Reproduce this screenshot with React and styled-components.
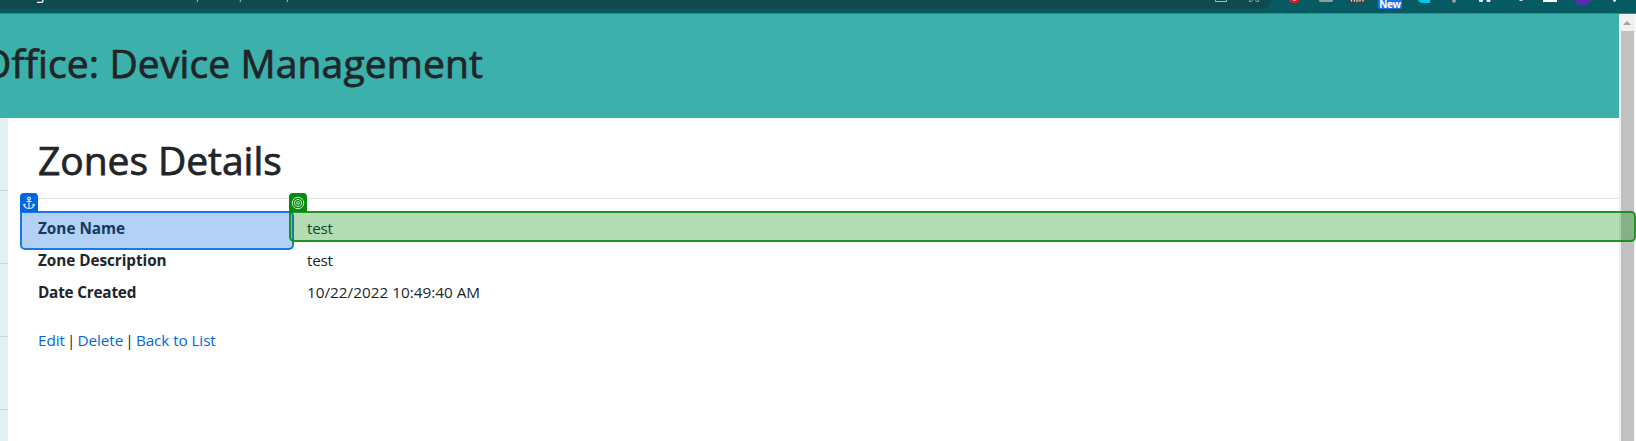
import React from 'react';
import styled, { createGlobalStyle } from 'styled-components';

const Global = createGlobalStyle`
  * { box-sizing: border-box; }
  body { margin: 0; overflow: hidden; background: #fff; color: #212529; font-family: "Open Sans", "Noto Sans", sans-serif; }
`;
const Window = styled.div`width: 1636px; height: 441px; display: flex; flex-direction: column; overflow: hidden; position: relative;`;
const Chrome = styled.div`height: 14px; flex: none; background: #055b61; border-bottom: 1px solid #32888a; display: flex; overflow: hidden;`;
const AddressBar = styled.div`width: 1271px; height: 9px; background: #0f4a50; border-bottom-right-radius: 9px; overflow: hidden;`;
const ToolbarArt = styled.svg`position: absolute; left: 0; top: 0;`;
const NewBadge = styled.span`
  position: absolute; left: 1378px; top: -4px; width: 24px; height: 13px; border-radius: 2px;
  background: #1a73e8; color: #fff; font-size: 10px; font-weight: 700; line-height: 16px; text-align: center;
  letter-spacing: -0.3px;
`;
const Viewport = styled.div`flex: 1; min-height: 0; display: flex;`;
const Page = styled.div`flex: 1; min-width: 0; display: flex; flex-direction: column;`;
const Banner = styled.header`height: 104px; flex: none; background: #3cb0ab; overflow: hidden; padding-top: 23px;`;
const Title = styled.h1`
  margin: 0; font-size: 39px; line-height: 52px; font-weight: 500; white-space: nowrap;
  -webkit-text-stroke: 0.75px currentColor;
  letter-spacing: ${p => p.$track}px; margin-left: ${p => p.$shift || 0}px;
`;
const Body = styled.div`flex: 1; display: flex; min-height: 0;`;
const Sidebar = styled.aside`width: 8px; background: #dff1f0;`;
const SideItem = styled.div`height: 73px; border-bottom: 1px solid #c4d8d6;`;
const Main = styled.main`flex: 1; min-width: 0; padding: 16px 0 0 30px;`;
const Rule = styled.hr`margin: 12px 0 17px; border: 0; height: 1px; background: #e0e1e2;`;
const Details = styled.dl`margin: 0; display: grid; grid-template-columns: 269px 1fr; grid-auto-rows: 32px; font-size: 15.3px; line-height: 24px;`;
const Term = styled.dt`font-weight: 700; letter-spacing: ${p => p.$track}px;`;
const Value = styled.dd`margin: 0; letter-spacing: ${p => p.$track}px;`;
const Links = styled.nav`display: flex; gap: 2.2px; margin-top: 16px; font-size: 15.3px; line-height: 24px;`;
const Link = styled.a`color: #0366d6; letter-spacing: ${p => p.$track}px;`;
const Scrollbar = styled.div`width: 17px; background: #f1f1f1; display: flex; flex-direction: column; align-items: center; border-right: 1px solid #fafafa;`;
const ArrowBox = styled.div`height: 17px; display: grid; place-items: center;`;
const Thumb = styled.div`width: 13px; flex: 1; background: #c1c1c1;`;
const Highlight = styled.div`
  position: absolute; top: 211px; left: ${p => p.$x}px; width: ${p => p.$w}px; height: ${p => p.$h}px;
  border: 2px solid ${p => p.$line}; border-radius: 0 5px 5px 5px; background: ${p => p.$fill};
`;
const Tab = styled.div`
  position: absolute; top: 193px; left: ${p => p.$x}px; width: 18px; height: 19px; border-radius: 4px 4px 0 0;
  background: ${p => p.$color}; display: grid; place-items: center;
`;

export default function App() {
  return (
    <Window>
      <Global />
      <Chrome><AddressBar /></Chrome>
      <ToolbarArt width="1636" height="13" aria-hidden="true">
        <path d="M37 2.3h4.500q1.500 0 1.500-2.300" fill="none" stroke="#fff" strokeWidth="1.2" />
        <path d="M197 2l.7-2M240 2l.7-2M287 2l.7-2" stroke="#8fb3b7" strokeWidth="1.2" />
        <path d="M1215.5 0v1.500h11V0" fill="none" stroke="#a6bbbd" />
        <path d="M1249.500 0v1.500h2L1252.500 0M1255.500 0l1 1.500h2V0" fill="none" stroke="#8da6a9" />
        <circle cx="1294" cy="-3" r="6.2" fill="#e01b1b" />
        <path d="M1293 .5h3" stroke="#f6b5b5" fill="none" />
        <rect x="1319" y="-3" width="14" height="5" rx="1.5" fill="#969b9c" />
        <rect x="1350" y="-3" width="15.5" height="6" fill="#444" />
        <path d="M1351.5 0v1.500M1354.500 0v1.500M1356 1h2.500M1360 0v1.500M1363 0v1.500" stroke="#eee" strokeWidth="1.2" />
        <path d="M1418 0q1 3 5 3h7V0z" fill="#00c8e8" />
        <path d="M1452 0h4v1l-1 1.700h-2l-1-1.700z" fill="#999" />
        <path d="M1479.500 0v1.500h3V0M1487 0v1.500h3V0" fill="#e4eeee" stroke="#e4eeee" />
        <path d="M1519.500 0h3v1h-3z" fill="#d5e5e6" />
        <rect x="1543" y="0" width="14" height="2" fill="#fff" />
        <circle cx="1582.500" cy="-4" r="10" fill="#5430a8" />
        <circle cx="1614.500" cy=".3" r="1.500" fill="#fff" />
      </ToolbarArt>
      <NewBadge>New</NewBadge>
      <Viewport>
        <Page>
          <Banner><Title $track={0.13} $shift={-19}>Office: Device Management</Title></Banner>
          <Body>
            <Sidebar><SideItem /><SideItem /><SideItem /><SideItem /></Sidebar>
            <Main>
              <Title $track={-0.05}>Zones Details</Title>
              <Rule />
              <Details>
                <Term $track={0}>Zone Name</Term><Value $track={-0.3}>test</Value>
                <Term $track={-0.05}>Zone Description</Term><Value $track={-0.3}>test</Value>
                <Term $track={-0.2}>Date Created</Term><Value $track={0}>10/22/2022 10:49:40 AM</Value>
              </Details>
              <Links><Link $track={-0.1}>Edit</Link><span>|</span><Link $track={-0.1}>Delete</Link><span>|</span><Link $track={-0.1}>Back to List</Link></Links>
            </Main>
          </Body>
        </Page>
        <Scrollbar>
          <ArrowBox><svg width="8" height="4"><path d="M0 4L4 0l4 4z" fill="#a3a3a3" /></svg></ArrowBox>
          <Thumb />
        </Scrollbar>
      </Viewport>
      <Highlight $x={20} $w={274} $h={39} $line="rgba(0,103,223,.85)" $fill="rgba(0,103,223,.3)" />
      <Tab $x={20} $color="#0067df">
        <svg width="12" height="14" viewBox="0 0 12 14" fill="none" stroke="#d6e6fb" strokeWidth="1.2"><circle cx="6" cy="2.500" r="1.400" /><path d="M6 4v8.500M3.500 5.500h5M1 8.500q.5 4 5 4t5-4M.5 10l.6-1.700 1.700.8M11.500 10l-.6-1.700-1.700.8" /></svg>
      </Tab>
      <Highlight $x={289} $w={1347} $h={31} $line="rgba(3,140,8,.85)" $fill="rgba(3,140,8,.3)" />
      <Tab $x={289} $color="#038c08">
        <svg width="14" height="14" viewBox="0 0 14 14" fill="none" stroke="#c5e5c6"><circle cx="7" cy="7" r="5.800" /><circle cx="7" cy="7" r="3.600" /><circle cx="7" cy="7" r="1.400" /></svg>
      </Tab>
    </Window>
  );
}
